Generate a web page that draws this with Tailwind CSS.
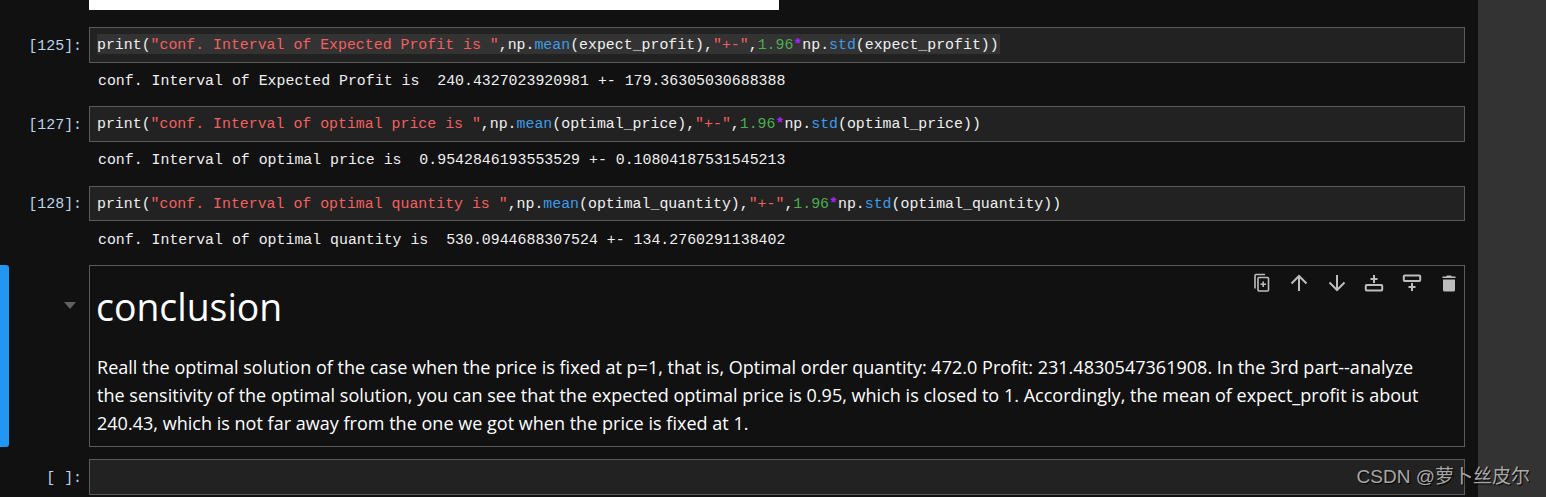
<!DOCTYPE html>
<html lang="en">
<head>
<meta charset="UTF-8">
<title>conclusion</title>
<script src="https://cdn.jsdelivr.net/npm/@tailwindcss/browser@4"></script>
</head>
<body class="bg-[#111111] overflow-hidden">
<div class="relative flex h-[497px] w-[1546px] overflow-hidden">
  <!-- notebook -->
  <div class="w-[1478px] shrink-0 font-['Liberation_Mono',monospace] text-[14.89px] text-[#f0f0f0]">
    <div class="ml-[89px] h-[10px] w-[690px] bg-white"></div>

    <!-- cell 125 -->
    <div class="mt-[17px] flex h-[36px]">
      <div class="w-[89px] pr-[7px] pt-[8px] text-right text-[#bcd6ea]">[125]:</div>
      <div class="h-full w-[1376px] border border-[#5a5a5a] bg-[#222222] pl-[7px] pt-[6px]">
        <div class="h-[20px] w-[903px] whitespace-pre bg-[#333333] pt-[1px] leading-[20px]">print(<span class="text-[#f55f5f]">"conf. Interval of Expected Profit is "</span>,np.<span class="text-[#3d9be9]">mean</span>(expect_profit),<span class="text-[#f55f5f]">"+-"</span>,<span class="text-[#4caf50]">1.96</span><span class="font-bold text-[#aa22ff]">*</span>np.<span class="text-[#3d9be9]">std</span>(expect_profit))</div>
      </div>
    </div>
    <div class="ml-[98px] h-[43px] whitespace-pre pt-[8px] leading-[20px]">conf. Interval of Expected Profit is  240.4327023920981 +- 179.36305030688388</div>

    <!-- cell 127 -->
    <div class="flex h-[36px]">
      <div class="w-[89px] pr-[7px] pt-[8px] text-right text-[#bcd6ea]">[127]:</div>
      <div class="h-full w-[1376px] whitespace-pre border border-[#5a5a5a] bg-[#222222] pl-[7px] pt-[7px] leading-[20px]">print(<span class="text-[#f55f5f]">"conf. Interval of optimal price is "</span>,np.<span class="text-[#3d9be9]">mean</span>(optimal_price),<span class="text-[#f55f5f]">"+-"</span>,<span class="text-[#4caf50]">1.96</span><span class="font-bold text-[#aa22ff]">*</span>np.<span class="text-[#3d9be9]">std</span>(optimal_price))</div>
    </div>
    <div class="ml-[98px] h-[44px] whitespace-pre pt-[8px] leading-[20px]">conf. Interval of optimal price is  0.9542846193553529 +- 0.10804187531545213</div>

    <!-- cell 128 -->
    <div class="flex h-[35px]">
      <div class="w-[89px] pr-[7px] pt-[7px] text-right text-[#bcd6ea]">[128]:</div>
      <div class="h-full w-[1376px] whitespace-pre border border-[#5a5a5a] bg-[#222222] pl-[7px] pt-[7px] leading-[20px]">print(<span class="text-[#f55f5f]">"conf. Interval of optimal quantity is "</span>,np.<span class="text-[#3d9be9]">mean</span>(optimal_quantity),<span class="text-[#f55f5f]">"+-"</span>,<span class="text-[#4caf50]">1.96</span><span class="font-bold text-[#aa22ff]">*</span>np.<span class="text-[#3d9be9]">std</span>(optimal_quantity))</div>
    </div>
    <div class="ml-[98px] h-[44px] whitespace-pre pt-[9px] leading-[20px]">conf. Interval of optimal quantity is  530.0944688307524 +- 134.2760291138402</div>

    <!-- markdown cell -->
    <div class="flex h-[182px]">
      <div class="h-full w-[9px] rounded-r-[3px] bg-[#2196f3]"></div>
      <div class="flex w-[80px] justify-end pr-[13px] pt-[37px]">
        <div class="h-0 w-0 border-x-[6px] border-t-[7px] border-x-transparent border-t-[#616161]"></div>
      </div>
      <div class="relative h-[182px] w-[1376px] border border-[#5a5a5a] pl-[6px] font-['Open_Sans',sans-serif] text-white">
        <div class="pt-[16px] text-[37.4px] leading-[50px]">conclusion</div>
        <p class="mt-[21px] w-[1345px] pl-[1px] text-[18px] leading-[28px] tracking-[0.02px]">Reall the optimal solution of the case when the price is fixed at p=1, that is, Optimal order quantity: 472.0 Profit: 231.4830547361908. In the 3rd part--analyze the sensitivity of the optimal solution, you can see that the expected optimal price is 0.95, which is closed to 1. Accordingly, the mean of expect_profit is about 240.43, which is not far away from the one we got when the price is fixed at 1.</p>

        <!-- cell toolbar -->
        <div class="absolute right-[3px] top-[5px] flex items-center gap-[13.5px] text-[#bdbdbd]">
          <svg class="h-[24px] w-[24px]" viewBox="0 0 24 24" fill="none" stroke="currentColor" stroke-width="1.6"><path d="M5 17.500V4.500a1 1 0 0 1 1-1h9"/><rect x="8" y="6.500" width="10.500" height="13.500" rx="1"/><path d="M13.200 10.500v5.500M10.500 13.200h5.500"/></svg>
          <svg class="h-[24px] w-[24px]" viewBox="0 0 24 24" fill="none" stroke="currentColor" stroke-width="2"><path d="M12 20V5M4.500 12.500 12 5l7.500 7.500"/></svg>
          <svg class="h-[24px] w-[24px]" viewBox="0 0 24 24" fill="none" stroke="currentColor" stroke-width="2"><path d="M12 4v15M4.500 11.500 12 19l7.500-7.500"/></svg>
          <svg class="h-[24px] w-[24px]" viewBox="0 0 24 24" fill="none" stroke="currentColor" stroke-width="2"><rect x="3.800" y="14" width="16.400" height="5.600" rx="0.800"/><path d="M12 4v8M8.500 8h7"/></svg>
          <svg class="h-[24px] w-[24px]" viewBox="0 0 24 24" fill="none" stroke="currentColor" stroke-width="2"><rect x="3.800" y="4.400" width="16.400" height="5.600" rx="0.800"/><path d="M12 12v8M8.500 16h7"/></svg>
          <svg class="h-[24px] w-[24px]" viewBox="0 0 24 24" fill="currentColor"><path d="M6 8.500h12V19a1.500 1.500 0 0 1-1.500 1.500h-9A1.500 1.500 0 0 1 6 19zM5.500 5.500H9L10 4.500h4l1 1h3.500V7h-13z"/></svg>
        </div>
      </div>
    </div>

    <!-- empty cell -->
    <div class="mt-[12px] flex h-[36px]">
      <div class="w-[89px] whitespace-pre pr-[7px] pt-[8px] text-right text-[#bcd6ea]">[ ]:</div>
      <div class="h-full w-[1376px] border border-[#5a5a5a] bg-[#222222]"></div>
    </div>
  </div>

  <!-- right gutter -->
  <div class="h-full flex-1 bg-[#333333]"></div>

  <!-- watermark -->
  <div class="absolute right-[16px] top-[465px] whitespace-nowrap font-['Liberation_Sans','Noto_Sans_CJK_SC',sans-serif] text-[19px] leading-[24px] text-[#a8a8a8] [text-shadow:1px_1px_1px_#000000]">CSDN @萝卜丝皮尔</div>
</div>
</body>
</html>
